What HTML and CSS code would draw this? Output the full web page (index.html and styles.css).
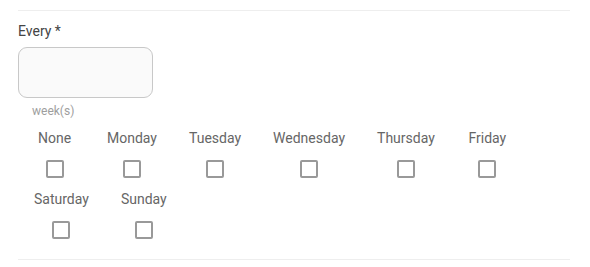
FILE: index.html
```html
<!DOCTYPE html>
<html>
<head>
<meta charset="utf-8">
<title>Repeat</title>
<link rel="stylesheet" href="styles.css">
</head>
<body>
<div class="repeat">
	<label class="field-label" for="every">Every *</label>
	<input type="text" id="every" class="every-input">
	<div class="hint">week(s)</div>

	<div class="days">
		<label class="day"><span>None</span><input type="checkbox"></label>
		<label class="day"><span>Monday</span><input type="checkbox"></label>
		<label class="day"><span>Tuesday</span><input type="checkbox"></label>
		<label class="day"><span>Wednesday</span><input type="checkbox"></label>
		<label class="day"><span>Thursday</span><input type="checkbox"></label>
		<label class="day"><span>Friday</span><input type="checkbox"></label>
		<label class="day"><span>Saturday</span><input type="checkbox"></label>
		<label class="day"><span>Sunday</span><input type="checkbox"></label>
	</div>
</div>
</body>
</html>
```

FILE: styles.css
```css
body {
	margin: 0;
	font-family: Roboto, 'Liberation Sans', Arial, sans-serif;
	font-size: 14px;
	color: #444;
	background: #fff;
}
.repeat {
	margin: 10px 20px 0 18px;
	padding: 10px 0 9px;
	border-top: 1px solid #eee;
	border-bottom: 1px solid #eee;
}
.field-label {
	display: block;
	line-height: 20px;
	color: #444;
}
.every-input {
	display: block;
	box-sizing: border-box;
	width: 135px;
	height: 51px;
	margin: 6px 0 0;
	border: 1px solid #c8c8c8;
	border-radius: 9px;
	background: #fafafa;
	outline: none;
}
.hint {
	margin-top: 5px;
	padding-left: 14px;
	font-size: 12px;
	line-height: 16px;
	color: #9e9e9e;
}
/* days of week */
.days {
	display: flex;
	flex-wrap: wrap;
	margin-top: 9px;
}
.day {
	display: flex;
	flex-direction: column;
	align-items: center;
	min-width: 73px;
	box-sizing: border-box;
	padding: 0 16px 11px;
	color: #666;
	line-height: 20px;
}
.day input {
	appearance: none;
	-webkit-appearance: none;
	box-sizing: border-box;
	width: 18px;
	height: 18px;
	margin: 12px 0 0;
	border: 2px solid #999;
	border-radius: 2px;
	background: #fff;
}
```
